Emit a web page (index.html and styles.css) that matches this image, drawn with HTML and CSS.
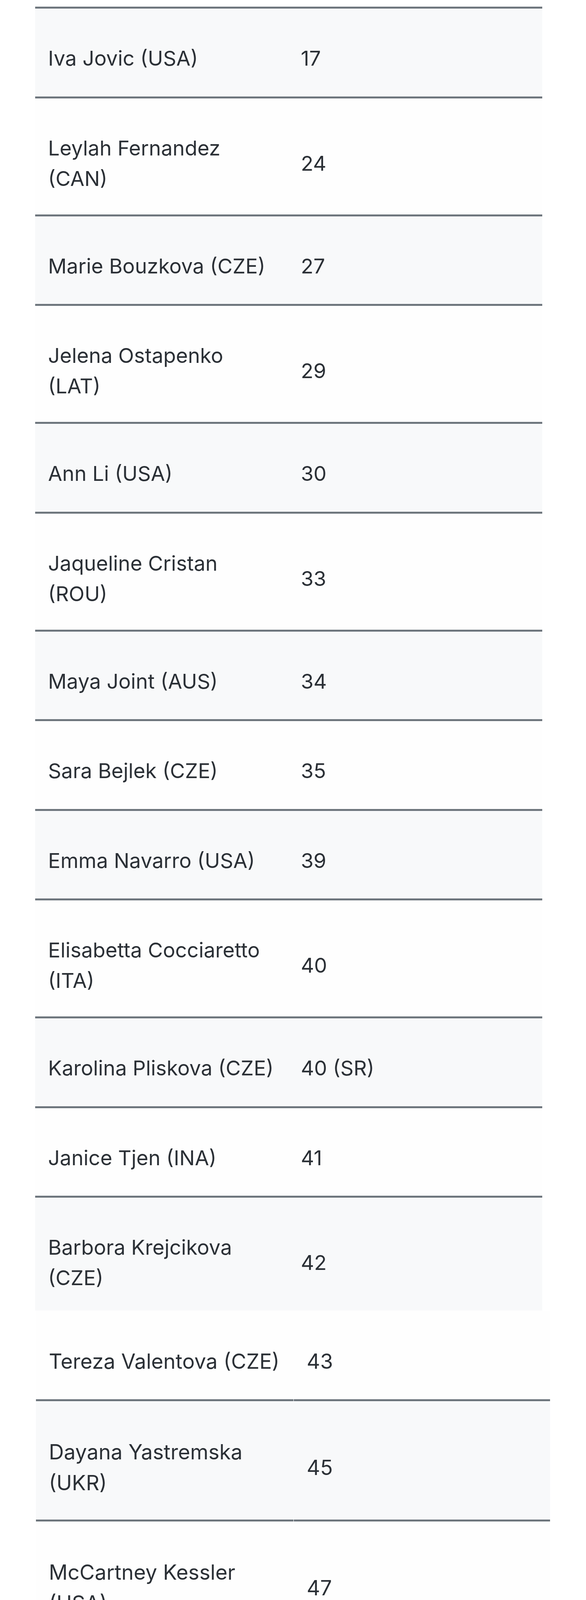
FILE: index.html
```html
<!DOCTYPE html>
<html lang="en">
<head>
<meta charset="utf-8">
<title>Players</title>
<link rel="stylesheet" href="styles.css">
</head>
<body>
<div class="page">
  <div class="tbl tbl-a">
    <div class="row odd one"><div class="c name"><span>Iva Jovic (USA)</span></div><div class="c rank"><span>17</span></div></div>
    <div class="row even two"><div class="c name"><span>Leylah Fernandez<br>(CAN)</span></div><div class="c rank"><span>24</span></div></div>
    <div class="row odd one"><div class="c name"><span>Marie Bouzkova (CZE)</span></div><div class="c rank"><span>27</span></div></div>
    <div class="row even two"><div class="c name"><span>Jelena Ostapenko<br>(LAT)</span></div><div class="c rank"><span>29</span></div></div>
    <div class="row odd one"><div class="c name"><span>Ann Li (USA)</span></div><div class="c rank"><span>30</span></div></div>
    <div class="row even two"><div class="c name"><span>Jaqueline Cristan<br>(ROU)</span></div><div class="c rank"><span>33</span></div></div>
    <div class="row odd one"><div class="c name"><span>Maya Joint (AUS)</span></div><div class="c rank"><span>34</span></div></div>
    <div class="row even one"><div class="c name"><span>Sara Bejlek (CZE)</span></div><div class="c rank"><span>35</span></div></div>
    <div class="row odd one"><div class="c name"><span>Emma Navarro (USA)</span></div><div class="c rank"><span>39</span></div></div>
    <div class="row even two"><div class="c name"><span>Elisabetta Cocciaretto<br>(ITA)</span></div><div class="c rank"><span>40</span></div></div>
    <div class="row odd one"><div class="c name"><span>Karolina Pliskova (CZE)</span></div><div class="c rank"><span>40 (SR)</span></div></div>
    <div class="row even one"><div class="c name"><span>Janice Tjen (INA)</span></div><div class="c rank"><span>41</span></div></div>
    <div class="row odd two cut"><div class="c name"><span>Barbora Krejcikova<br>(CZE)</span></div><div class="c rank"><span>42</span></div></div>
  </div>
  <div class="tbl tbl-b">
    <div class="row even one noline"><div class="c name"><span>Tereza Valentova (CZE)</span></div><div class="c rank"><span>43</span></div></div>
    <div class="row odd two"><div class="c name"><span>Dayana Yastremska<br>(UKR)</span></div><div class="c rank"><span>45</span></div></div>
    <div class="row even two"><div class="c name"><span>McCartney Kessler<br>(USA)</span></div><div class="c rank"><span>47</span></div></div>
    <div class="row odd one"><div class="c name"><span>Maria Sakkari (GRE)</span></div><div class="c rank"><span>48</span></div></div>
    <div class="row even one"><div class="c name"><span>Lois Boisson (FRA)</span></div><div class="c rank"><span>50</span></div></div>
    <div class="row odd two"><div class="c name"><span>Jessica Bouzas<br>Maneiro (ESP)</span></div><div class="c rank"><span>51</span></div></div>
    <div class="row even one"><div class="c name"><span>Tatjana Maria (GER)</span></div><div class="c rank"><span>52</span></div></div>
    <div class="row odd one last"><div class="c name"><span>Qinwen Zheng (CHN)</span></div><div class="c rank"><span>53</span></div></div>
  </div>
  <div class="smudge"></div>
</div>
</body>
</html>
```
FILE: styles.css
```css
html, body {
  margin: 0;
  padding: 0;
  background: #ffffff;
}

body {
  font-family: Inter, "Noto Sans", "Liberation Sans", sans-serif;
  color: #2b3036;
}

.page {
  position: relative;
  height: 5449px;
  overflow: hidden;
}

.tbl {
  display: flex;
  flex-direction: column;
}

.row {
  display: grid;
}

.odd {
  background: #f8f9fa;
}

.even {
  background: #fefefe;
}

.c {
  border-top: 5px solid #6e767d;
}

.name {
  white-space: nowrap;
}

.rank {
  display: flex;
  align-items: center;
  white-space: nowrap;
}

/* first captured part */
.tbl-a {
  margin-left: 90px;
  width: 1298px;
  padding-top: 17px;
  font-size: 52.7px;
  line-height: 78px;
}

.tbl-a .row {
  grid-template-columns: 647px 1fr;
}

.tbl-a .c {
  padding: 88px 33px 58.5px;
}

.tbl-a .two .c {
  padding-bottom: 53px;
}

.tbl-a .cut .c {
  padding-bottom: 45px;
}

/* second captured part, slightly larger */
.tbl-b {
  margin-left: 92px;
  width: 1316px;
  font-size: 53.3px;
  line-height: 79px;
}

.tbl-b .row {
  grid-template-columns: 659px 1fr;
  column-gap: 1px;
}

.tbl-b .c {
  padding: 90px 33px 58px;
}

.tbl-b .two .c {
  padding-bottom: 55px;
}

.tbl-b .noline .c {
  border-top: 0;
}

.tbl-b .last .c {
  border-bottom: 12px solid #6e767d;
}

.smudge {
  position: absolute;
  left: 622px;
  top: 5388px;
  width: 248px;
  height: 44px;
  background: repeating-linear-gradient(90deg, rgba(225, 226, 228, 0.8) 0 10px, rgba(255, 255, 255, 0) 10px 26px);
  filter: blur(3px);
  opacity: 0.7;
}
```
